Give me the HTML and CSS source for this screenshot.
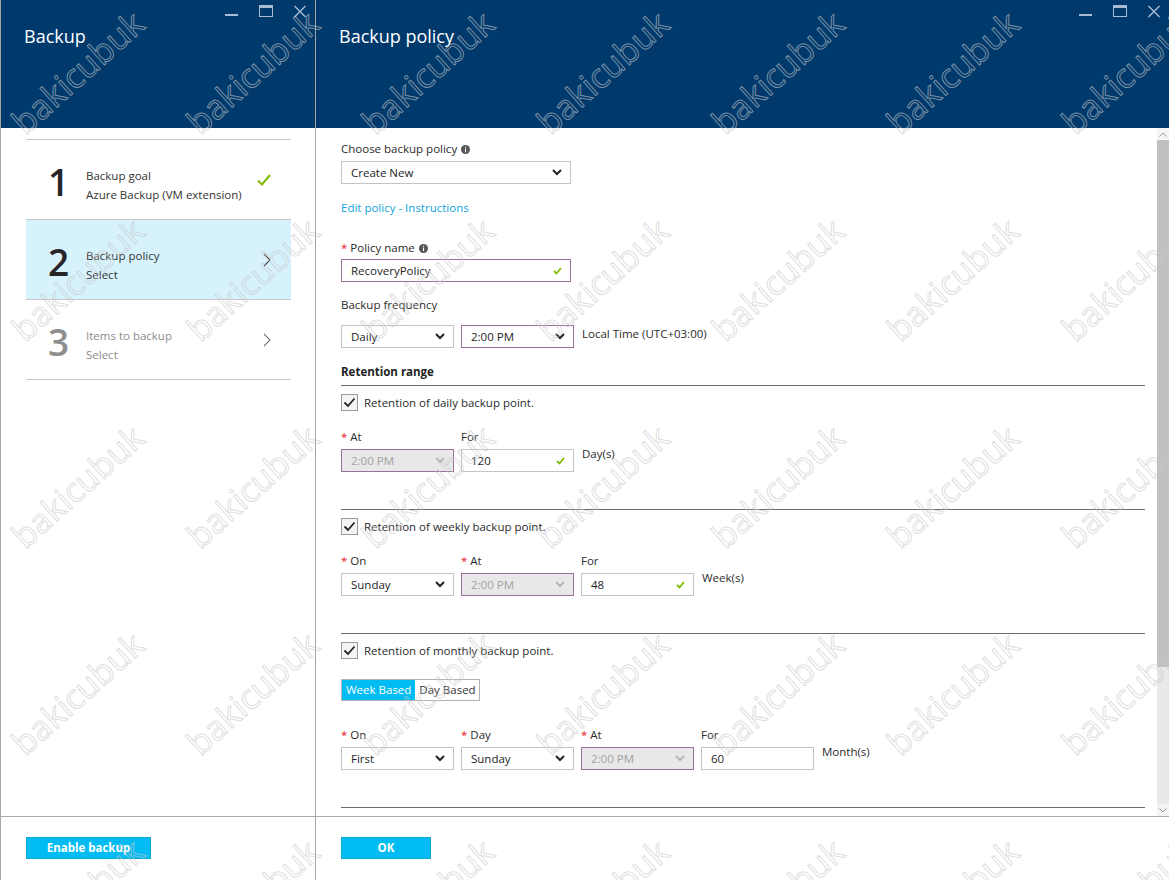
FILE: index.html
```html
<!DOCTYPE html>
<html lang="en">
<head>
  <meta charset="UTF-8">
  <title>Backup - Backup policy</title>
  <link rel="stylesheet" href="styles.css">
</head>
<body>
  <div class="portal">

    <!-- left blade: wizard steps -->
    <section class="blade blade-steps">
      <header class="blade-head">
        <h1>Backup</h1>
        <div class="win-ctrls">
          <svg width="13" height="13" viewBox="0 0 13 13"><rect x="0" y="9" width="13" height="2" fill="currentColor"/></svg>
          <svg width="14" height="13" viewBox="0 0 14 13"><rect x="0.5" y="0.5" width="13" height="11" fill="none" stroke="currentColor"/><rect x="0" y="0" width="14" height="3" fill="currentColor"/></svg>
          <svg width="12" height="13" viewBox="0 0 12 13"><path d="M0.5 1 L11.5 12 M11.5 1 L0.5 12" stroke="currentColor" stroke-width="1.4"/></svg>
        </div>
      </header>
      <div class="blade-body">
        <ul class="steps">
          <li class="step done">
            <span class="step-num">1</span>
            <div class="step-text">
              <div>Backup goal</div>
              <div>Azure Backup (VM extension)</div>
            </div>
            <svg class="step-icon" width="14" height="12" viewBox="0 0 14 12"><path d="M1 6.5 L5 10.5 L13 1" fill="none" stroke="#7fba00" stroke-width="2"/></svg>
          </li>
          <li class="step active">
            <span class="step-num">2</span>
            <div class="step-text">
              <div>Backup policy</div>
              <div>Select</div>
            </div>
            <svg class="step-icon" width="8" height="14" viewBox="0 0 8 14"><path d="M1 1 L7 7 L1 13" fill="none" stroke="#444" stroke-width="1.1"/></svg>
          </li>
          <li class="step disabled">
            <span class="step-num">3</span>
            <div class="step-text">
              <div>Items to backup</div>
              <div>Select</div>
            </div>
            <svg class="step-icon" width="8" height="14" viewBox="0 0 8 14"><path d="M1 1 L7 7 L1 13" fill="none" stroke="#777" stroke-width="1.1"/></svg>
          </li>
        </ul>
      </div>
      <footer class="blade-foot">
        <button class="btn btn-wide">Enable backup</button>
      </footer>
    </section>

    <!-- right blade: policy form -->
    <section class="blade blade-policy">
      <header class="blade-head">
        <h1>Backup policy</h1>
        <div class="win-ctrls">
          <svg width="13" height="13" viewBox="0 0 13 13"><rect x="0" y="9" width="13" height="2" fill="currentColor"/></svg>
          <svg width="14" height="13" viewBox="0 0 14 13"><rect x="0.5" y="0.5" width="13" height="11" fill="none" stroke="currentColor"/><rect x="0" y="0" width="14" height="3" fill="currentColor"/></svg>
          <svg width="12" height="13" viewBox="0 0 12 13"><path d="M0.5 1 L11.5 12 M11.5 1 L0.5 12" stroke="currentColor" stroke-width="1.4"/></svg>
        </div>
      </header>
      <div class="blade-body split">
        <div class="form">
          <div class="label">Choose backup policy <svg class="info" width="9" height="9" viewBox="0 0 9 9"><circle cx="4.5" cy="4.5" r="4.5" fill="#555"/><rect x="4" y="3.6" width="1.1" height="3.6" fill="#fff"/><rect x="4" y="1.7" width="1.1" height="1.1" fill="#fff"/></svg></div>
          <div class="select wide gap5">
            <span>Create New</span>
            <svg width="10" height="7" viewBox="0 0 10 7"><path d="M1 1 L5 5 L9 1" fill="none" stroke="#222" stroke-width="2"/></svg>
          </div>
          <a class="link" href="#">Edit policy - Instructions</a>

          <div class="label gap24"><span class="req">*</span> Policy name <svg class="info" width="9" height="9" viewBox="0 0 9 9"><circle cx="4.5" cy="4.5" r="4.5" fill="#555"/><rect x="4" y="3.6" width="1.1" height="3.6" fill="#fff"/><rect x="4" y="1.7" width="1.1" height="1.1" fill="#fff"/></svg></div>
          <div class="select wide focus gap3">
            <span>RecoveryPolicy</span>
            <svg width="9" height="8" viewBox="0 0 9 8"><path d="M1 4 L3.5 6.5 L8 1" fill="none" stroke="#7fba00" stroke-width="1.8"/></svg>
          </div>

          <div class="label gap15">Backup frequency</div>
          <div class="row gap12">
            <div class="select">
              <span>Daily</span>
              <svg width="10" height="7" viewBox="0 0 10 7"><path d="M1 1 L5 5 L9 1" fill="none" stroke="#222" stroke-width="2"/></svg>
            </div>
            <div class="select focus">
              <span>2:00 PM</span>
              <svg width="10" height="7" viewBox="0 0 10 7"><path d="M1 1 L5 5 L9 1" fill="none" stroke="#222" stroke-width="2"/></svg>
            </div>
            <span class="unit tight">Local Time (UTC+03:00)</span>
          </div>

          <div class="section-head">Retention range</div>

          <!-- daily -->
          <div class="section">
            <label class="check"><span class="box"><svg width="17" height="17" viewBox="0 0 17 17"><path d="M3.5 8.5 L7 12 L13.5 4.5" fill="none" stroke="#222" stroke-width="1.8"/></svg></span>Retention of daily backup point.</label>
            <div class="row gap18">
              <div class="field">
                <div class="label"><span class="req">*</span> At</div>
                <div class="select focus off">
                  <span>2:00 PM</span>
                  <svg width="10" height="7" viewBox="0 0 10 7"><path d="M1 1 L5 5 L9 1" fill="none" stroke="#aaa" stroke-width="1.6"/></svg>
                </div>
              </div>
              <div class="field">
                <div class="label">For</div>
                <div class="select">
                  <span>120</span>
                  <svg width="9" height="8" viewBox="0 0 9 8"><path d="M1 4 L3.5 6.5 L8 1" fill="none" stroke="#7fba00" stroke-width="1.8"/></svg>
                </div>
              </div>
              <span class="unit">Day(s)</span>
            </div>
          </div>

          <!-- weekly -->
          <div class="section">
            <label class="check"><span class="box"><svg width="17" height="17" viewBox="0 0 17 17"><path d="M3.5 8.5 L7 12 L13.5 4.5" fill="none" stroke="#222" stroke-width="1.8"/></svg></span>Retention of weekly backup point.</label>
            <div class="row gap18">
              <div class="field">
                <div class="label"><span class="req">*</span> On</div>
                <div class="select">
                  <span>Sunday</span>
                  <svg width="10" height="7" viewBox="0 0 10 7"><path d="M1 1 L5 5 L9 1" fill="none" stroke="#222" stroke-width="2"/></svg>
                </div>
              </div>
              <div class="field">
                <div class="label"><span class="req">*</span> At</div>
                <div class="select focus off">
                  <span>2:00 PM</span>
                  <svg width="10" height="7" viewBox="0 0 10 7"><path d="M1 1 L5 5 L9 1" fill="none" stroke="#aaa" stroke-width="1.6"/></svg>
                </div>
              </div>
              <div class="field">
                <div class="label">For</div>
                <div class="select">
                  <span>48</span>
                  <svg width="9" height="8" viewBox="0 0 9 8"><path d="M1 4 L3.5 6.5 L8 1" fill="none" stroke="#7fba00" stroke-width="1.8"/></svg>
                </div>
              </div>
              <span class="unit">Week(s)</span>
            </div>
          </div>

          <!-- monthly -->
          <div class="section">
            <label class="check"><span class="box"><svg width="17" height="17" viewBox="0 0 17 17"><path d="M3.5 8.5 L7 12 L13.5 4.5" fill="none" stroke="#222" stroke-width="1.8"/></svg></span>Retention of monthly backup point.</label>
            <div class="toggle">
              <span class="on">Week Based</span>
              <span>Day Based</span>
            </div>
            <div class="row gap26">
              <div class="field">
                <div class="label"><span class="req">*</span> On</div>
                <div class="select">
                  <span>First</span>
                  <svg width="10" height="7" viewBox="0 0 10 7"><path d="M1 1 L5 5 L9 1" fill="none" stroke="#222" stroke-width="2"/></svg>
                </div>
              </div>
              <div class="field">
                <div class="label"><span class="req">*</span> Day</div>
                <div class="select">
                  <span>Sunday</span>
                  <svg width="10" height="7" viewBox="0 0 10 7"><path d="M1 1 L5 5 L9 1" fill="none" stroke="#222" stroke-width="2"/></svg>
                </div>
              </div>
              <div class="field">
                <div class="label"><span class="req">*</span> At</div>
                <div class="select focus off">
                  <span>2:00 PM</span>
                  <svg width="10" height="7" viewBox="0 0 10 7"><path d="M1 1 L5 5 L9 1" fill="none" stroke="#aaa" stroke-width="1.6"/></svg>
                </div>
              </div>
              <div class="field">
                <div class="label">For</div>
                <div class="select">
                  <span>60</span>
                </div>
              </div>
              <span class="unit">Month(s)</span>
            </div>
          </div>
        </div>

        <div class="scrollbar">
          <div class="sb-arrow"><svg width="8" height="5" viewBox="0 0 8 5"><path d="M0.5 4.5 L4 1 L7.5 4.5" fill="none" stroke="#999"/></svg></div>
          <div class="sb-thumb"></div>
          <div class="sb-track"></div>
          <div class="sb-arrow"><svg width="8" height="5" viewBox="0 0 8 5"><path d="M0.5 0.5 L4 4 L7.5 0.5" fill="none" stroke="#999"/></svg></div>
        </div>
      </div>
      <footer class="blade-foot">
        <button class="btn">OK</button>
      </footer>
    </section>

    <!-- watermark over everything -->
    <div class="watermark">
      <span>bakicubuk</span><span>bakicubuk</span><span>bakicubuk</span><span>bakicubuk</span><span>bakicubuk</span><span>bakicubuk</span><span>bakicubuk</span>
      <span>bakicubuk</span><span>bakicubuk</span><span>bakicubuk</span><span>bakicubuk</span><span>bakicubuk</span><span>bakicubuk</span><span>bakicubuk</span>
      <span>bakicubuk</span><span>bakicubuk</span><span>bakicubuk</span><span>bakicubuk</span><span>bakicubuk</span><span>bakicubuk</span><span>bakicubuk</span>
      <span>bakicubuk</span><span>bakicubuk</span><span>bakicubuk</span><span>bakicubuk</span><span>bakicubuk</span><span>bakicubuk</span><span>bakicubuk</span>
      <span>bakicubuk</span><span>bakicubuk</span><span>bakicubuk</span><span>bakicubuk</span><span>bakicubuk</span><span>bakicubuk</span><span>bakicubuk</span>
    </div>
  </div>
</body>
</html>
```

FILE: styles.css
```css
body {
  margin: 0;
  background: #fff;
  font-family: 'Open Sans', 'Noto Sans', sans-serif;
  font-size: 11.5px;
  color: #222;
  overflow: hidden;
}
.portal {
  position: relative;
  display: flex;
  height: 880px;
  width: 1169px;
  overflow: hidden;
}
.blade {
  display: flex;
  flex-direction: column;
  height: 880px;
  background: #fff;
}
.blade-steps {
  width: 314px;
  border-left: 1px solid #a6a6a6;
  border-right: 1px solid #a6a6a6;
}
.blade-policy {
  flex: 1;
}
.blade-head {
  height: 128px;
  flex-shrink: 0;
  background: #003a6d;
  color: #fff;
  display: flex;
  justify-content: space-between;
  align-items: flex-start;
  padding: 0 9px 0 23px;
}
.blade-head h1 {
  margin: 24px 0 0;
  font-size: 18px;
  font-weight: normal;
  line-height: 24px;
}
.win-ctrls {
  display: flex;
  gap: 21px;
  margin-top: 5px;
  color: #a9bcd2;
}
.blade-body {
  flex: 1;
  min-height: 0;
}
.blade-foot {
  box-sizing: border-box;
  height: 64px;
  flex-shrink: 0;
  border-top: 1px solid #acacac;
  padding: 20px 0 0 25px;
}
.btn {
  display: block;
  height: 22px;
  width: 90px;
  border: 1px solid #0aa8d8;
  background: #00bcf2;
  color: #fff;
  font-family: inherit;
  font-size: 11.5px;
  font-weight: bold;
  padding: 0;
  line-height: 18px;
}
.btn-wide {
  width: 125px;
}

/* steps */
.steps {
  list-style: none;
  margin: 11px 24px 0 25px;
  padding: 0;
  border-top: 1px solid #c8c8c8;
}
.step {
  height: 79px;
  border-bottom: 1px solid #c8c8c8;
  display: flex;
  align-items: center;
  padding: 0 20px 0 22px;
  color: #333;
}
.step.active {
  background: #d6f2fc;
}
.step.disabled {
  color: #8c8c8c;
}
.step-num {
  width: 38px;
  font-size: 37px;
  font-weight: 600;
  line-height: 40px;
  color: #262626;
  margin-top: 4px;
}
.step.disabled .step-num {
  color: #8f8f8f;
}
.step-text {
  flex: 1;
  font-size: 11.5px;
  line-height: 19px;
  margin-top: 10px;
}
.step-icon {
  margin-top: 1px;
}

/* policy form */
.split {
  display: flex;
}
.form {
  flex: 1;
  padding: 13px 12px 0 25px;
  overflow: hidden;
}
.label {
  line-height: 16px;
  color: #2b2b2b;
  white-space: nowrap;
}
.info {
  vertical-align: -0.5px;
  margin-left: 1px;
}
.req {
  color: #e81123;
}
.gap3 { margin-top: 3px; }
.gap5 { margin-top: 4px; }
.gap12 { margin-top: 12px; }
.gap15 { margin-top: 15px; }
.gap18 { margin-top: 18px; }
.gap24 { margin-top: 24px; }
.gap26 { margin-top: 26px; }
.link {
  display: block;
  margin-top: 16px;
  line-height: 16px;
  color: #12a5db;
  text-decoration: none;
}
.select {
  box-sizing: border-box;
  width: 113px;
  height: 23px;
  border: 1px solid #c4c4c4;
  display: flex;
  align-items: center;
  justify-content: space-between;
  padding: 0 8px 0 9px;
  color: #1e1e1e;
  background: #fff;
}
.select.wide {
  width: 230px;
}
.select.focus {
  border-color: #9a6f9c;
}
.select.off {
  background: #e8e8e8;
  color: #a3a3a3;
}
.row {
  display: flex;
  align-items: flex-start;
  gap: 7px;
}
.field .label {
  margin-bottom: 4px;
}
.unit {
  margin: 17px 0 0 1px;
  line-height: 16px;
  color: #2b2b2b;
}
.unit.tight {
  margin-top: 1px;
}
.section-head {
  margin-top: 16px;
  line-height: 16px;
  font-weight: bold;
  padding-bottom: 5px;
  border-bottom: 1px solid #6d6d6d;
}
.section {
  padding-bottom: 37px;
  border-bottom: 1px solid #6d6d6d;
}
.check {
  display: flex;
  align-items: center;
  gap: 6px;
  margin-top: 8px;
  height: 17px;
  color: #2b2b2b;
}
.check .box {
  box-sizing: border-box;
  width: 17px;
  height: 17px;
  border: 1px solid #9a9a9a;
  background: #f4f4f4;
  display: flex;
}
.check .box svg {
  margin: -1px;
}
.toggle {
  display: inline-flex;
  margin-top: 20px;
  height: 22px;
  border: 1px solid #b3b3b3;
  box-sizing: border-box;
}
.toggle span {
  line-height: 20px;
  padding: 0 3px 0 4px;
  color: #333;
}
.toggle .on {
  background: #00bcf2;
  color: #fff;
  padding: 0 4px;
}

/* scrollbar */
.scrollbar {
  width: 12px;
  display: flex;
  flex-direction: column;
  background: #e9e9e9;
}
.sb-arrow {
  height: 12px;
  display: flex;
  align-items: center;
  justify-content: center;
  background: #f4f4f4;
}
.sb-thumb {
  height: 527px;
  background: #c0c0c0;
}
.sb-track {
  flex: 1;
}

/* watermark */
.watermark {
  position: absolute;
  top: -32px;
  left: -10px;
  display: grid;
  grid-template-columns: repeat(7, 175px);
  grid-template-rows: repeat(5, 207px);
  place-items: center;
  pointer-events: none;
  z-index: 10;
}
.watermark span {
  font-family: 'Open Sans', sans-serif;
  font-size: 34px;
  line-height: 1;
  color: transparent;
  -webkit-text-stroke: 1px rgba(200, 200, 200, 0.6);
  transform: rotate(-42deg);
}
```
